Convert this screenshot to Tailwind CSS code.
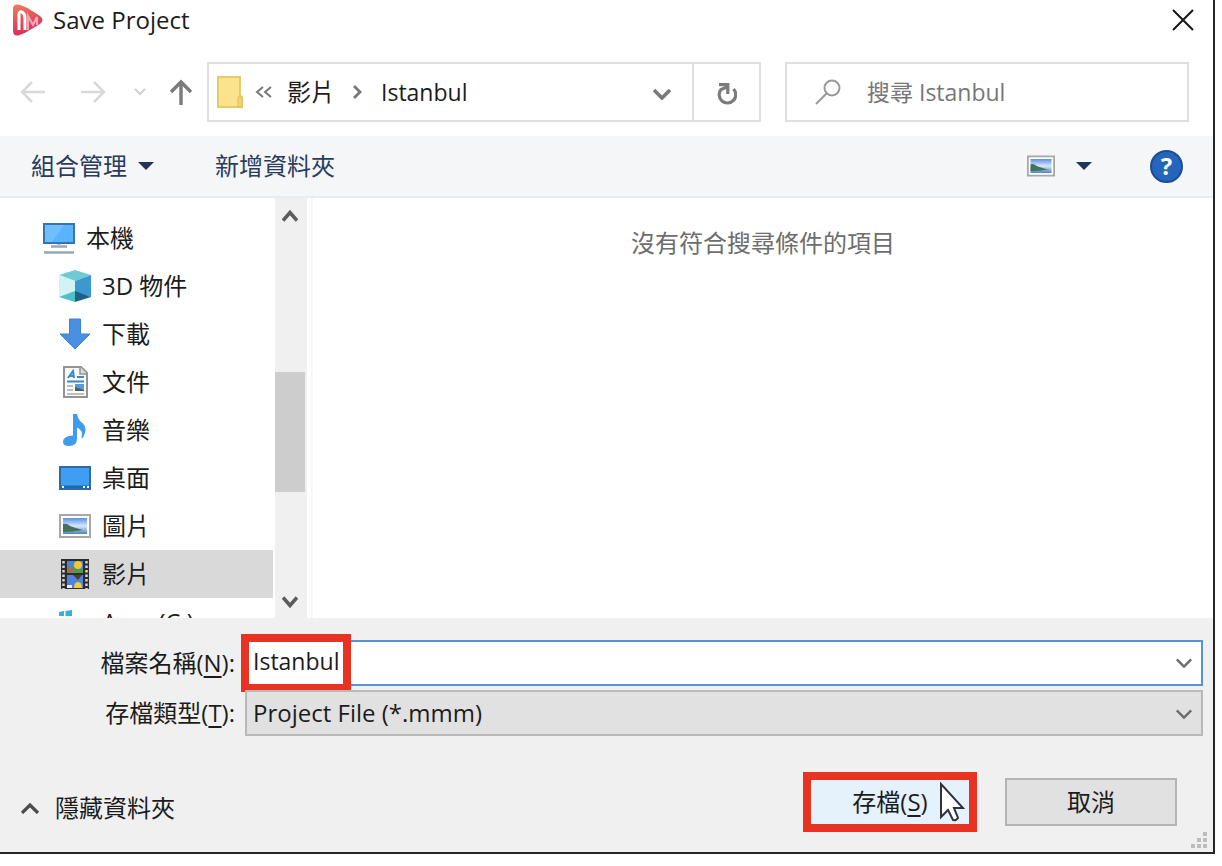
<!DOCTYPE html>
<html lang="zh-Hant">
<head>
<meta charset="utf-8">
<title>Save Project</title>
<script src="https://cdn.jsdelivr.net/npm/@tailwindcss/browser@4"></script>
</head>
<body class="h-screen bg-white pr-[7px] pb-3 text-2xl/8 text-[#1c1c1c] font-['Open_Sans','Noto_Sans_CJK_TC',sans-serif]">
<svg class="absolute size-0" aria-hidden="true">
  <defs>
    <linearGradient id="sky" x1="0" y1="0" x2="0" y2="1"><stop offset="0" stop-color="#5b8fe6"/><stop offset=".5" stop-color="#d5e9fb"/><stop offset="1" stop-color="#4f83b8"/></linearGradient>
    <symbol id="photo" viewBox="0 0 32 24">
      <rect x="1" y="1" width="30" height="22" fill="#fff" stroke="#a6a6a6" stroke-width="2"/>
      <rect x="4" y="4" width="24" height="16" fill="url(#sky)"/>
      <path d="M4 10q4-1 7 2q5 2 13 4q-10 2-20 2z" fill="#44705c"/>
    </symbol>
    <symbol id="chev" viewBox="0 0 20 12"><path d="M2 2l8 8 8-8" fill="none" stroke="currentColor" stroke-width="2.6"/></symbol>
  </defs>
</svg>
<main class="flex h-full flex-col border-r-2 border-b-2 border-[#262626] bg-white">
  <header class="flex h-11 shrink-0 items-center pr-[19px] pb-1 pl-3">
    <svg class="size-8" viewBox="0 0 32 32">
      <defs><linearGradient id="logo" x1="0" y1="0" x2=".3" y2="1"><stop offset="0" stop-color="#ee7e5c"/><stop offset="1" stop-color="#d62d5c"/></linearGradient></defs>
      <path d="M6 .5Q1 0 1 5V27Q1 32 6 31.5Q10 31 28 20Q33 16 28 12Q12 1 6 .5z" fill="url(#logo)"/>
      <path d="M7 26V11Q7 7 10 8Q13 10 13 14V26" fill="none" stroke="#fff" stroke-width="3"/>
      <path d="M16 26V12l5 9 4-8v8" fill="none" stroke="#f2a5b5" stroke-width="2.200"/>
    </svg>
    <h1 class="ml-[9px] flex-1">Save Project</h1>
    <button aria-label="關閉"><svg class="size-[22px]" viewBox="0 0 22 22"><path d="M1 1l20 20M21 1L1 21" stroke="#161616" stroke-width="2"/></svg></button>
  </header>

  <nav class="mt-[18px] flex h-[60px] shrink-0 items-center pr-6 pl-5" aria-label="位置">
    <button aria-label="上一頁" class="text-[#d9d9d9]"><svg class="h-6 w-[26px]" viewBox="0 0 26 24" fill="none" stroke="currentColor" stroke-width="2.500"><path d="M25 12H2M12 2L2 12l10 10"/></svg></button>
    <button aria-label="下一頁" class="ml-[34px] text-[#d9d9d9]"><svg class="h-6 w-[26px]" viewBox="0 0 26 24" fill="none" stroke="currentColor" stroke-width="2.500"><path d="M1 12h23M14 2l10 10-10 10"/></svg></button>
    <button aria-label="最近的位置" class="ml-7 text-[#d0d0d0]"><svg class="h-2 w-3" viewBox="0 0 12 8"><path d="M1 1l5 5 5-5" fill="none" stroke="currentColor" stroke-width="2"/></svg></button>
    <button aria-label="上移一層" class="ml-[23px] text-[#7b7b7b]"><svg class="h-[26px] w-6" viewBox="0 0 24 26" fill="none" stroke="currentColor" stroke-width="3.400"><path d="M12 26V3M2 13L12 3l10 10"/></svg></button>
    <div class="ml-[14px] flex h-full flex-1 border-2 border-[#dfdfdf]">
      <div class="flex flex-1 items-center pr-5 pl-2">
        <svg class="h-8 w-[26px]" viewBox="0 0 26 32"><path d="M1 1h22v19l2 1v10H1z" fill="#fbe38e" stroke="#e6cb69" stroke-width="2"/><path d="M21 31V22q0-2 2-2t2 2v9z" fill="#f2d573" stroke="#dfc057"/></svg>
        <svg class="ml-3 h-3 w-[17px]" viewBox="0 0 17 12" fill="none" stroke="#777" stroke-width="2"><path d="M8 1L2 6l6 5M16 1l-6 5 6 5"/></svg>
        <a href="#" class="ml-[15px]">影片</a>
        <svg class="ml-[18px] h-[14px] w-[10px]" viewBox="0 0 10 14" fill="none" stroke="#777" stroke-width="2.800"><path d="M1 1l6 6-6 6"/></svg>
        <a href="#" class="ml-[18px] flex-1 text-[23px]">Istanbul</a>
        <button aria-label="先前的位置" class="text-[#7a7a7a]"><svg class="mt-1 h-3 w-5" viewBox="0 0 20 12"><path d="M2 2l8 8 8-8" fill="none" stroke="currentColor" stroke-width="3.600"/></svg></button>
      </div>
      <button aria-label="重新整理" class="grid w-[67px] place-items-center border-l-2 border-[#dfdfdf]"><svg class="mt-1 h-[22px] w-5" viewBox="0 0 20 22" fill="none" stroke="#7b7b7b" stroke-width="3.200"><path d="M16.500 6A8.300 8.300 0 1 1 4 6.500L10 4"/><path d="M2 1.600h8.800V11"/></svg></button>
    </div>
    <label class="ml-6 flex h-full w-[404px] shrink-0 items-center border-2 border-[#dfdfdf] pl-7">
      <svg class="size-[26px]" viewBox="0 0 26 26" fill="none" stroke="#999" stroke-width="2"><circle cx="17" cy="9" r="7.500"/><path d="M11.500 14.500L1 25"/></svg>
      <input type="search" aria-label="搜尋" placeholder="搜尋 Istanbul" class="ml-[26px] min-w-0 flex-1 text-[23px] outline-none placeholder:text-[#777]">
    </label>
  </nav>

  <div class="mt-[14px] flex h-[62px] shrink-0 items-center border-b-2 border-[#e9ebed] bg-[#f4f6f8] pr-[30px] pl-[31px] text-[#2a3b5e]">
    <button class="flex items-center gap-[11px]">組合管理<svg class="h-2 w-4" viewBox="0 0 16 8"><path d="M0 0h16L8 8z" fill="#203558"/></svg></button>
    <button class="ml-[61px]">新增資料夾</button>
    <button aria-label="檢視" class="ml-auto flex items-center gap-[21px]"><svg class="h-[22px] w-7"><use href="#photo"/></svg><svg class="h-2 w-4" viewBox="0 0 16 8"><path d="M0 0h16L8 8z" fill="#203558"/></svg></button>
    <button aria-label="說明" class="ml-[58px] grid size-[33px] place-items-center rounded-full border-2 border-[#1c4d8f] bg-[#2465bd] text-2xl/7 font-bold text-white">?</button>
  </div>

  <div class="flex min-h-0 flex-1">
    <ul class="w-[273px] shrink-0 overflow-hidden pt-4 [&>li]:flex [&>li]:h-12 [&>li]:items-center [&>li]:gap-[11px] [&>li]:pl-[59px] [&_svg]:w-8">
      <li class="pl-[43px]!"><svg class="h-8" viewBox="0 0 32 32"><rect x="1" y="2" width="30" height="19" fill="#5bb3fb" stroke="#3475ad" stroke-width="2"/><path d="M2 3h19L9 20H2z" fill="#86c9fd" opacity=".5"/><path d="M8 24.500h16M1 30.500h30" stroke="#98a7b8" stroke-width="2.500"/><path d="M14 22h4v2h-4z" fill="#b7c3cf"/></svg>本機</li>
      <li><svg class="h-8" viewBox="0 0 32 32"><path d="M0 5L16 0l16 5-16 6z" fill="#6fcbd3"/><path d="M0 5l16 6v11L0 27z" fill="#d2f3f3"/><path d="M32 5l-16 6v11l16 5z" fill="#3d98d0"/><path d="M0 27l16-6v11z" fill="#4fbfc8"/><path d="M32 27l-16-6v11z" fill="#1b6285"/></svg>3D 物件</li>
      <li><svg class="h-8" viewBox="0 0 32 32"><path d="M10.500 1h11v15H31L16 31 1 16h9.500z" fill="#4a90e2" stroke="#3f80cc"/></svg>下載</li>
      <li><svg class="h-8" viewBox="0 0 32 32"><path d="M5 1h17l6 6v24H5z" fill="#fafafa" stroke="#939393" stroke-width="2"/><path d="M21 1v7h7" fill="#ddd" stroke="#939393" stroke-width="1.500"/><path d="M9 12l5-7 1 7M11 10h4M18 11h7M8 15.500h17" fill="none" stroke="#3489cf" stroke-width="2"/><path d="M8 20h6M8 24h6M8 28h17" stroke="#aaa" stroke-width="1.500"/><path d="M16 18h9v7h-9z" fill="#5c9ae0"/><path d="M16 25v-4l9 3v1z" fill="#3c6957"/></svg>文件</li>
      <li><svg class="h-8" viewBox="0 0 32 32"><path d="M14 0h4q1 6 6 9.500 5 5 0 14-1 1-1.500 0 2-7-4.500-10V25q0 7-8 7-6 0-6-4 0-6 10-6.500z" fill="#3f9cea"/></svg>音樂</li>
      <li><svg class="h-6" viewBox="0 0 32 24"><rect x="1" y="1" width="30" height="22" fill="#3f9ef2" stroke="#2b6ca8" stroke-width="2"/><path d="M2 19.500h28V22H2z" fill="#1e69aa"/><path d="M3 21h2m19 0h2m2 0h2" stroke="#fff" stroke-width="2"/></svg>桌面</li>
      <li><svg class="h-6"><use href="#photo"/></svg>圖片</li>
      <li class="bg-[#d9d9d9]" aria-current="true"><svg class="h-8" viewBox="0 0 32 32"><path d="M2 1h28v30H2z" fill="#2c2c2c"/><path d="M4.500 3v28M27.500 3v28" stroke="#d5d5d5" stroke-width="2.500" stroke-dasharray="2.500 2"/><path d="M8 3h16v12H8zM8 17h16v13H8z" fill="#4e83df"/><path d="M8 10q4-3 8 0l8 2v3H8z" fill="#4c9a53"/><circle cx="19" cy="7" r="4" fill="#f1c92b"/><path d="M9 11h6v3H9z" fill="#e05341"/><path d="M14 17h9l-4 5z" fill="#5b3829"/><path d="M15 30q0-6 4-6t4 6z" fill="#f2cb35"/><path d="M8 27h5v3H8z" fill="#e7f3fb"/></svg>影片</li>
      <li><svg class="h-8" viewBox="0 0 32 32"><path d="M0 6l5-1v5H0zM6.500 5L13 4v6H6.500z" fill="#35aee2"/><path d="M0 18h32v10H0z" fill="#999"/></svg>Acer (C:)</li>
    </ul>
    <div class="ml-[2px] flex w-8 shrink-0 flex-col bg-[#f0f0f0] pt-3 pb-[10px] text-[#5c5c5c]" aria-hidden="true">
      <svg class="ml-[7px] h-3 w-4" viewBox="0 0 16 12"><path d="M1 10.500l7-8 7 8" fill="none" stroke="currentColor" stroke-width="3.600"/></svg>
      <div class="flex w-full flex-1 flex-col pr-[2px]"><div class="flex-[150]"></div><div class="flex-[120] bg-[#cdcdcd]"></div><div class="flex-[104]"></div></div>
      <svg class="ml-[7px] h-3 w-4" viewBox="0 0 16 12"><path d="M1 1.500l7 8 7-8" fill="none" stroke="currentColor" stroke-width="3.600"/></svg>
    </div>
    <section class="ml-1 flex-1 border-l-2 border-[#f7f7f7] pt-[29px] text-center text-[#6d6d6d]">沒有符合搜尋條件的項目</section>
  </div>

  <form class="shrink-0 bg-[#f0f0f0]">
    <div class="grid grid-cols-[235px_1fr] items-center gap-x-[10px] gap-y-1 pt-[22px] pr-[10px]">
      <label for="name" class="text-right">檔案名稱(<u class="underline-offset-4">N</u>):</label>
      <div class="relative flex h-[46px] items-center border-2 border-[#5693d6] bg-white pr-2 pl-[6px]">
        <input id="name" value="Istanbul" class="min-w-0 flex-1 pb-1 text-[23px] outline-none">
        <button type="button" aria-label="顯示名稱" class="text-[#6b6b6b]"><svg class="h-3 w-[18px]"><use href="#chev"/></svg></button>
        <span class="pointer-events-none absolute top-[-8px] left-[-6px] h-[58px] w-[110px] border-8 border-[#e83323]"></span>
      </div>
      <label for="type" class="text-right">存檔類型(<u class="underline-offset-4">T</u>):</label>
      <div class="relative flex h-[46px] text-[#6b6b6b]">
        <select id="type" class="w-full appearance-none border-2 border-[#b9b9b9] bg-[#e1e1e1] pl-[6px] text-[#1c1c1c]"><option>Project File (*.mmm)</option></select>
        <svg class="pointer-events-none absolute top-[18px] right-[10px] h-3 w-[18px]"><use href="#chev"/></svg>
      </div>
    </div>
    <div class="relative flex items-center pt-9 pr-9 pb-5 pl-5">
      <button type="button" class="mt-3 mr-auto flex items-center gap-[15px]"><svg class="h-3 w-5" viewBox="0 0 20 12"><path d="M2 11l8-8 8 8" fill="none" stroke="#4b4b4b" stroke-width="3.200"/></svg>隱藏資料夾</button>
      <button type="button" class="relative h-[60px] w-[174px] border-8 border-[#e83323] bg-[#e5f1fb]">存檔(<u class="underline-offset-4">S</u>)
        <svg class="absolute top-[2px] left-[128px] h-10 w-[26px]" viewBox="0 0 26 40"><path d="M2 2v33l7-7 5 10q3 1 5-2l-4-10h9z" fill="#fff" stroke="#30323c" stroke-width="2"/></svg>
      </button>
      <button type="button" class="ml-7 h-12 w-[172px] border-2 border-[#b5b5b5] bg-[#e1e1e1]">取消</button>
      <svg class="absolute right-[6px] bottom-1 size-4" viewBox="0 0 16 16" fill="#bdbdbd"><path d="M12 0h4v4h-4zM6 6h4v4H6zM12 6h4v4h-4zM0 12h4v4H0zM6 12h4v4H6zM12 12h4v4h-4z"/></svg>
    </div>
  </form>
</main>
</body>
</html>
